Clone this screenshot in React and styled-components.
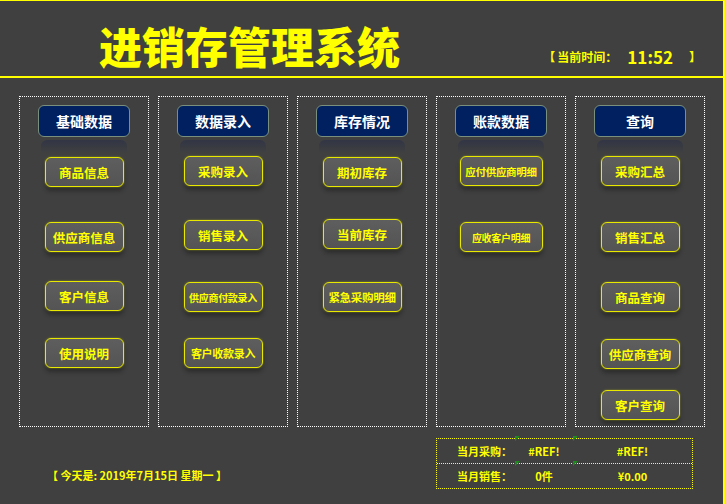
import React from 'react'
import styled, { createGlobalStyle } from 'styled-components'

const GlobalStyle = createGlobalStyle`
  html, body { margin: 0; padding: 0; background: #404040; }
  body { font-family: "Noto Sans CJK SC", "Liberation Sans", sans-serif; }
`

const columns = [
  {
    title: '基础数据',
    items: [
      { label: '商品信息', mt: 20 },
      { label: '供应商信息', mt: 35 },
      { label: '客户信息', mt: 29 },
      { label: '使用说明', mt: 27 },
    ],
  },
  {
    title: '数据录入',
    items: [
      { label: '采购录入', mt: 19 },
      { label: '销售录入', mt: 34 },
      { label: '供应商付款录入', mt: 32, size: 10 },
      { label: '客户收款录入', mt: 26, size: 11 },
    ],
  },
  {
    title: '库存情况',
    items: [
      { label: '期初库存', mt: 20 },
      { label: '当前库存', mt: 32 },
      { label: '紧急采购明细', mt: 33, size: 11.5 },
    ],
  },
  {
    title: '账款数据',
    items: [
      { label: '应付供应商明细', mt: 19, size: 10.5, wide: true },
      { label: '应收客户明细', mt: 36, size: 10, wide: true },
    ],
  },
  {
    title: '查询',
    items: [
      { label: '采购汇总', mt: 19 },
      { label: '销售汇总', mt: 36 },
      { label: '商品查询', mt: 30 },
      { label: '供应商查询', mt: 27 },
      { label: '客户查询', mt: 21 },
    ],
  },
]

const App = () => {
  return (
    <Page>
      <GlobalStyle />
      <Header>
        <Title>进销存管理系统</Title>
        <Clock>
          <span>【</span>
          <ClockLabel>当前时间：</ClockLabel>
          <ClockValue>11:52</ClockValue>
          <span>】</span>
        </Clock>
      </Header>

      <Panels>
        {columns.map((col) => (
          <Panel key={col.title}>
            <PanelTitle>{col.title}</PanelTitle>
            {col.items.map((it) => (
              <ItemButton key={it.label} $mt={it.mt} $size={it.size} $wide={it.wide}>
                {it.label}
              </ItemButton>
            ))}
          </Panel>
        ))}
      </Panels>

      <Footer>
        <Today>【 今天是: 2019年7月15日 星期一 】</Today>
        <Summary>
          <Row>
            <Cell $label>当月采购：</Cell>
            <Cell $flag>#REF!</Cell>
            <Cell $flag>#REF!</Cell>
          </Row>
          <Row $last>
            <Cell $label>当月销售：</Cell>
            <Cell $flag>0件</Cell>
            <Cell $flag>¥0.00</Cell>
          </Row>
        </Summary>
      </Footer>
    </Page>
  )
}

const Page = styled.div`
  width: 723px;
  height: 504px;
  background: #404040;
  border-right: 2px solid #ffff00;
  overflow: hidden;
`

const Header = styled.header`
  height: 75px;
  border-top: 1px solid #ffff00;
  border-bottom: 2px solid #ffff00;
  display: flex;
  align-items: center;
  padding-left: 99px;
  box-sizing: content-box;
`

const Title = styled.h1`
  margin: 14px 0 0;
  font-size: 43px;
  font-weight: 900;
  color: #ffff00;
  line-height: 1;
`

const Clock = styled.div`
  margin-left: auto;
  margin-right: 22px;
  margin-top: 36px;
  display: flex;
  align-items: center;
  color: #ffff00;
  font-size: 12px;
  font-weight: 700;
`

const ClockLabel = styled.span`
  margin-left: 2px;
`

const ClockValue = styled.span`
  font-size: 17px;
  font-weight: 700;
  margin: 0 16px 0 10px;
`

const Panels = styled.main`
  display: flex;
  gap: 9px;
  padding: 18px 0 0 19px;
`

const Panel = styled.section`
  width: 128px;
  height: 329px;
  border: 1px dotted #ffffff;
  display: flex;
  flex-direction: column;
  align-items: center;
`

const PanelTitle = styled.div`
  position: relative;
  margin-top: 8px;
  width: 90px;
  height: 30px;
  border: 1.5px solid #7a907c;
  border-radius: 6px;
  background: #002060;
  color: #ffffff;
  font-size: 14px;
  font-weight: 700;
  display: flex;
  align-items: center;
  justify-content: center;
  box-sizing: content-box;

  &::after {
    content: '';
    position: absolute;
    left: 2px;
    right: 2px;
    top: 34px;
    height: 13px;
    border-radius: 6px 6px 0 0;
    background: linear-gradient(to bottom, rgba(40, 46, 72, 0.6), rgba(64, 64, 64, 0));
  }
`

const ItemButton = styled.div`
  margin-top: ${({ $mt }) => $mt}px;
  width: ${({ $wide }) => ($wide ? 81 : 77)}px;
  height: 28px;
  border: 1.5px solid #e8e800;
  border-radius: 6px;
  background: linear-gradient(to bottom, #5e5e5e, #545454);
  box-shadow: 0 0 2px rgba(255, 255, 0, 0.45), 0 4px 4px rgba(20, 20, 20, 0.45);
  color: #ffff00;
  font-size: ${({ $size }) => $size || 12.5}px;
  font-weight: 700;
  letter-spacing: ${({ $size }) => ($size ? '-0.3px' : '0')};
  white-space: nowrap;
  display: flex;
  align-items: center;
  justify-content: center;
  box-sizing: content-box;
`

const Footer = styled.footer`
  display: flex;
  align-items: flex-start;
  padding: 11px 0 0 47px;
`

const Today = styled.div`
  margin-top: 29px;
  color: #ffff00;
  font-size: 11px;
  font-weight: 700;
  white-space: nowrap;
`

const Summary = styled.div`
  margin-left: auto;
  margin-right: 30px;
  width: 255px;
  border: 1px dotted #ffff00;
`

const Row = styled.div`
  display: grid;
  grid-template-columns: 78px 58px 1fr;
  height: 24px;
  border-bottom: ${({ $last }) => ($last ? 'none' : '1px dotted #ffff00')};
`

const Cell = styled.div`
  position: relative;
  display: flex;
  align-items: center;
  justify-content: ${({ $label }) => ($label ? 'flex-end' : 'center')};
  padding-right: ${({ $label }) => ($label ? '3px' : '0')};
  color: #ffff00;
  font-size: 11px;
  font-weight: 700;

  &::before {
    content: '';
    display: ${({ $flag }) => ($flag ? 'block' : 'none')};
    position: absolute;
    left: 0;
    top: -3px;
    border-style: solid;
    border-width: 5px 5px 0 0;
    border-color: #1d8a1d transparent transparent transparent;
  }
`

export default App
